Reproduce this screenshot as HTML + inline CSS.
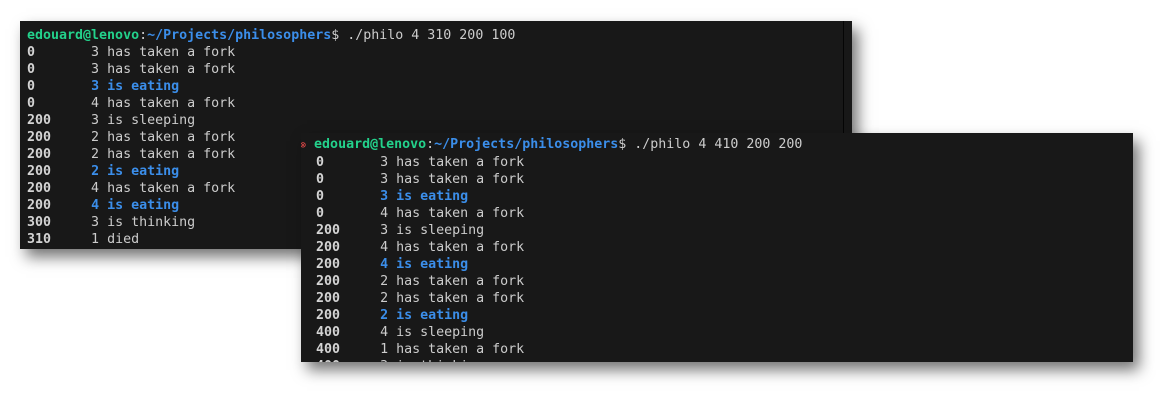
<!DOCTYPE html>
<html><head><style>
body{margin:0;width:1170px;height:402px;background:#fff;position:relative;overflow:hidden;font-family:"DejaVu Sans Mono","Liberation Mono",monospace;font-size:13.3px;}
.w{position:absolute;background:#181818;color:#cccccc;line-height:17px;white-space:pre;overflow:hidden;box-shadow:6px 8px 14px rgba(0,0,0,0.55);}
#a{left:20px;top:21px;width:832px;height:228px;}
#a:after{content:"";position:absolute;left:823px;top:0;width:1px;height:100%;background:#050505;}
#b{left:301px;top:133px;width:832px;height:229px;}
.g{color:#23d18b;font-weight:bold}
.p{color:#3b8eea;font-weight:bold}
.n{font-weight:bold;color:#d4d4d4}
.e{color:#3b8eea;font-weight:bold}
.x{color:#f14c4c;font-size:10px}
</style></head><body>
<div class="w" id="a"><div style="position:absolute;left:7px;top:6px"><span class="g">edouard@lenovo</span>:<span class="p">~/Projects/philosophers</span>$ ./philo 4 310 200 100
<span class="n">0</span>       3 has taken a fork
<span class="n">0</span>       3 has taken a fork
<span class="n">0</span>       <span class="e">3 is eating</span>
<span class="n">0</span>       4 has taken a fork
<span class="n">200</span>     3 is sleeping
<span class="n">200</span>     2 has taken a fork
<span class="n">200</span>     2 has taken a fork
<span class="n">200</span>     <span class="e">2 is eating</span>
<span class="n">200</span>     4 has taken a fork
<span class="n">200</span>     <span class="e">4 is eating</span>
<span class="n">300</span>     3 is thinking
<span class="n">310</span>     1 died
<span class="g">edouard@lenovo</span>:<span class="p">~/Projects/philosophers</span>$</div></div>
<div class="w" id="b"><div style="position:absolute;left:-1px;top:3px"><span class="x">⊗</span> <span class="g">edouard@lenovo</span>:<span class="p">~/Projects/philosophers</span>$ ./philo 4 410 200 200
  <span class="n">0</span>       3 has taken a fork
  <span class="n">0</span>       3 has taken a fork
  <span class="n">0</span>       <span class="e">3 is eating</span>
  <span class="n">0</span>       4 has taken a fork
  <span class="n">200</span>     3 is sleeping
  <span class="n">200</span>     4 has taken a fork
  <span class="n">200</span>     <span class="e">4 is eating</span>
  <span class="n">200</span>     2 has taken a fork
  <span class="n">200</span>     2 has taken a fork
  <span class="n">200</span>     <span class="e">2 is eating</span>
  <span class="n">400</span>     4 is sleeping
  <span class="n">400</span>     1 has taken a fork
  <span class="n">400</span>     3 is thinking</div></div>
</body></html>
